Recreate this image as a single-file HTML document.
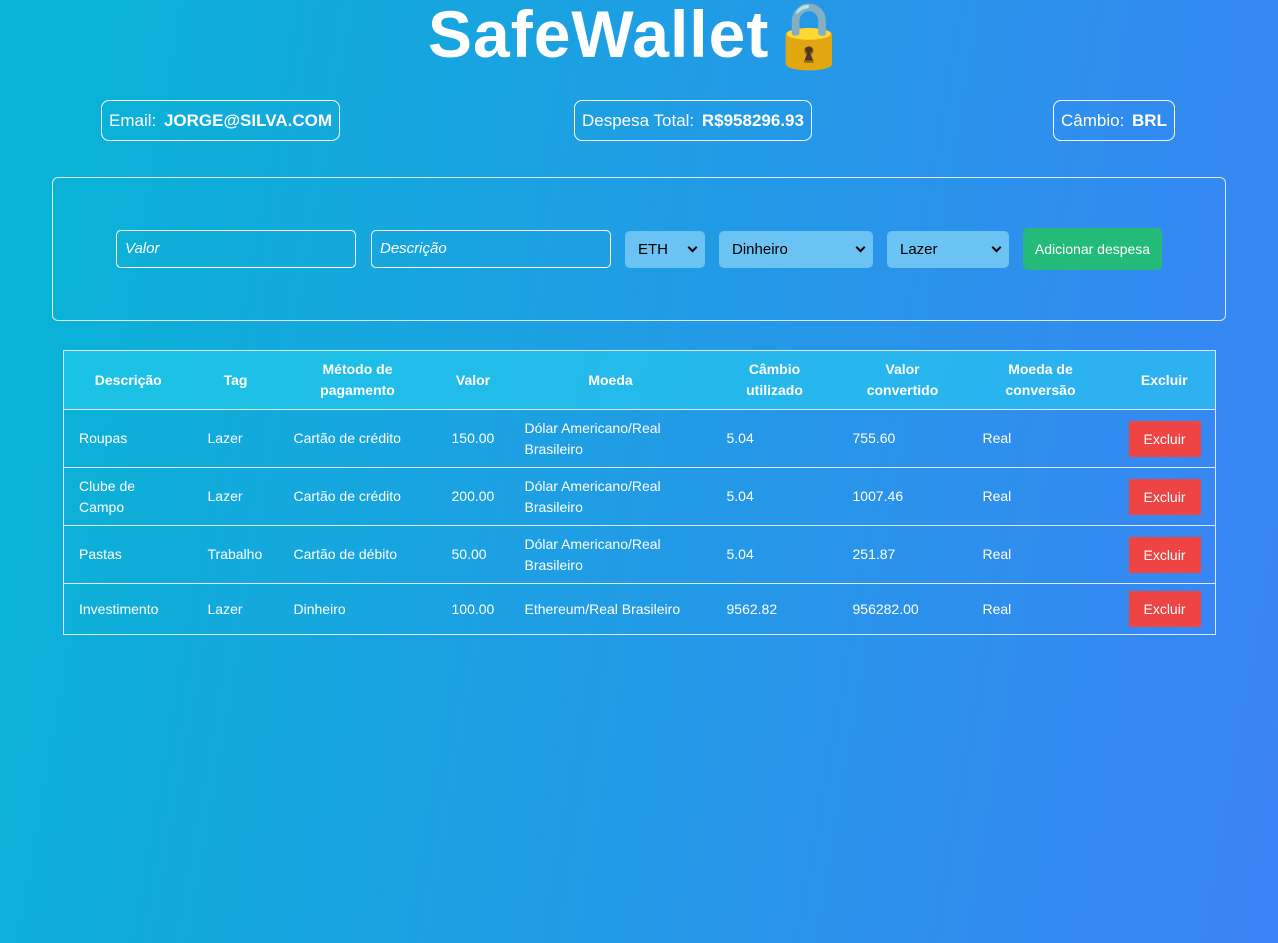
<!DOCTYPE html>
<html><head><meta charset="utf-8"><style>
*{box-sizing:border-box;margin:0;padding:0}
body{width:1278px;height:943px;overflow:hidden;background:linear-gradient(100deg,#06b6d4,#3b82f6);font-family:"Liberation Sans","DejaVu Sans",sans-serif;color:#fff;position:relative}
h1{position:absolute;left:428px;top:-4px;font-size:66px;font-weight:bold;letter-spacing:1px;line-height:76px;white-space:nowrap}
.pill{position:absolute;top:100px;height:41px;border:1px solid #fff;border-radius:8px;font-size:17px;line-height:39px;padding:0 7px;white-space:nowrap}
.pill b{margin-left:3px}
.form{position:absolute;left:52px;top:177px;width:1174px;height:144px;border:1px solid #dbeafe;border-radius:6px}
.inp{position:absolute;top:230px;height:38px;border:1px solid #fff;border-radius:5px;font-style:italic;font-size:15px;line-height:36px;padding-left:8px}
.sel{position:absolute;top:231px;height:37px;background:#6ac3f3;border-radius:5px;color:#000;font-size:15px;line-height:37px;padding-left:13px}
.sel:after{content:"";position:absolute;right:9px;top:13px;width:5px;height:5px;border-right:2px solid #000;border-bottom:2px solid #000;transform:rotate(45deg)}
.btn{position:absolute;left:1023px;top:228px;width:139px;height:42px;background:#22bb77;border-radius:5px;font-size:14px;line-height:42px;text-align:center}
table{position:absolute;left:63px;top:350px;width:1152px;border-collapse:collapse;border:1px solid #dbeafe;font-size:14px;line-height:21px;table-layout:fixed}
th{background:rgba(40,210,240,.55);height:59px;font-weight:bold;text-align:center}
td{padding-left:15px;border-top:1px solid #dbeafe;height:58px}
tr:last-child td{height:51px}
.x{display:inline-block;width:72px;height:36px;background:#ef4444;line-height:36px;text-align:center}
</style></head><body>
<h1>SafeWallet<span style="font-size:64px;letter-spacing:0">🔒</span></h1>
<div class="pill" style="left:101px">Email: <b>JORGE@SILVA.COM</b></div>
<div class="pill" style="left:574px">Despesa Total: <b>R$958296.93</b></div>
<div class="pill" style="left:1053px">Câmbio: <b>BRL</b></div>
<div class="form"></div>
<div class="inp" style="left:116px;width:240px">Valor</div>
<div class="inp" style="left:371px;width:240px">Descrição</div>
<div class="sel" style="left:625px;width:80px">ETH</div>
<div class="sel" style="left:719px;width:154px">Dinheiro</div>
<div class="sel" style="left:887px;width:122px">Lazer</div>
<div class="btn">Adicionar despesa</div>
<table>
<colgroup><col style="width:129px"><col style="width:86px"><col style="width:158px"><col style="width:73px"><col style="width:202px"><col style="width:126px"><col style="width:130px"><col style="width:146px"><col style="width:102px"></colgroup>
<tr><th>Descrição</th><th>Tag</th><th>Método de<br>pagamento</th><th>Valor</th><th>Moeda</th><th>Câmbio<br>utilizado</th><th>Valor<br>convertido</th><th>Moeda de<br>conversão</th><th>Excluir</th></tr>
<tr><td>Roupas</td><td>Lazer</td><td>Cartão de crédito</td><td>150.00</td><td>Dólar Americano/Real Brasileiro</td><td>5.04</td><td>755.60</td><td>Real</td><td><span class="x">Excluir</span></td></tr>
<tr><td>Clube de<br>Campo</td><td>Lazer</td><td>Cartão de crédito</td><td>200.00</td><td>Dólar Americano/Real Brasileiro</td><td>5.04</td><td>1007.46</td><td>Real</td><td><span class="x">Excluir</span></td></tr>
<tr><td>Pastas</td><td>Trabalho</td><td>Cartão de débito</td><td>50.00</td><td>Dólar Americano/Real Brasileiro</td><td>5.04</td><td>251.87</td><td>Real</td><td><span class="x">Excluir</span></td></tr>
<tr><td>Investimento</td><td>Lazer</td><td>Dinheiro</td><td>100.00</td><td>Ethereum/Real Brasileiro</td><td>9562.82</td><td>956282.00</td><td>Real</td><td><span class="x">Excluir</span></td></tr>
</table>
</body></html>
